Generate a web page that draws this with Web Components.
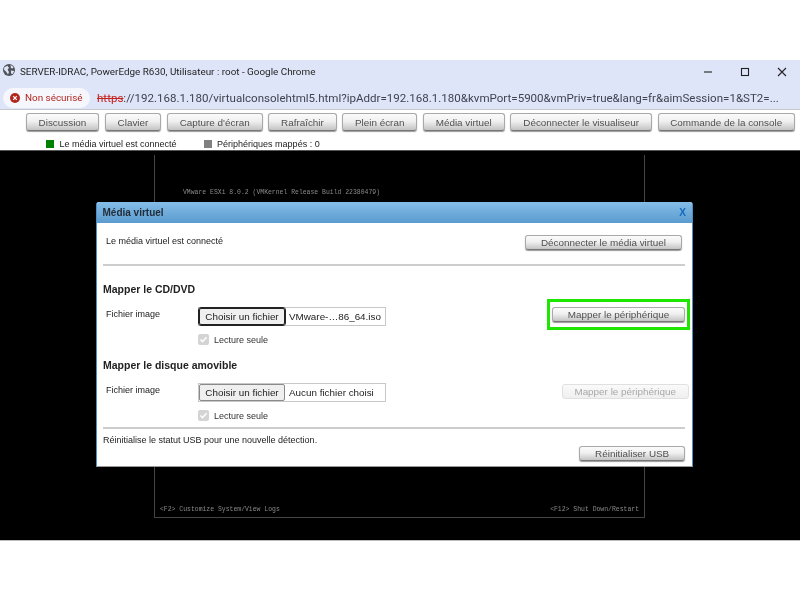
<!DOCTYPE html>
<html lang="fr">
<head>
<meta charset="utf-8">
<title>Média virtuel</title>
<style>
    html, body { margin: 0; height: 100%; background: #fff; overflow: hidden; }
    body { font-family: "Liberation Sans", Arial, sans-serif; padding-top: 60px; box-sizing: border-box; filter: blur(.35px); }
</style>
</head>
<body>
<chrome-bar></chrome-bar>
<kvm-toolbar>
    <kvm-button style="--w:73.5px">Discussion</kvm-button>
    <kvm-button style="--w:56.5px">Clavier</kvm-button>
    <kvm-button style="--w:96px">Capture d'écran</kvm-button>
    <kvm-button style="--w:68.5px">Rafraîchir</kvm-button>
    <kvm-button style="--w:75px">Plein écran</kvm-button>
    <kvm-button style="--w:82px">Média virtuel</kvm-button>
    <kvm-button style="--w:142px">Déconnecter le visualiseur</kvm-button>
    <kvm-button style="--w:137px">Commande de la console</kvm-button>
</kvm-toolbar>
<kvm-status></kvm-status>
<kvm-console>
    <media-dialog></media-dialog>
</kvm-console>

<script>
/* Chrome popup window: title bar + address bar */
class ChromeBar extends HTMLElement {
    constructor() {
        super();
        this.attachShadow({ mode: 'open' }).innerHTML = `
            <style>
                :host { display: block; background: #dfe5f8; border-bottom: 1px solid #c6c8cc; font-family: Roboto, "Open Sans", sans-serif; }
                .title { height: 23px; display: flex; align-items: center; padding-left: 3px; gap: 5px; font-size: 9.9px; color: #1f1f1f; }
                .title svg.globe { margin-top: -3px; flex: none; }
                .title span { flex: 1; white-space: nowrap; }
                .ctl { width: 37px; height: 23px; display: flex; align-items: center; justify-content: center; margin-left: -5px; }
                .addr { height: 26px; box-sizing: border-box; padding: 3px 0 0 3px; display: flex; align-items: center; }
                .pill { flex: none; height: 20px; width: 87px; box-sizing: border-box; border-radius: 10px; background: #f6f7fd; display: flex; align-items: center; gap: 5px; padding-left: 7px; font-size: 9.9px; color: #b3261e; white-space: nowrap; }
                .url { margin-left: 7px; font-size: 11.55px; color: #3f4350; white-space: nowrap; }
                s { color: #c5221f; }
            </style>
            <div class="title">
                <svg class="globe" width="12" height="12" viewBox="0 0 12 12"><circle cx="6" cy="6" r="6" fill="#4f5257"/><path d="M1.4 3.2 4.3 1.8 6 3.7 4.6 5.8 6 7.9 5 10.6 3 7.6 1 5.8ZM7.6 1 10.6 3 9.5 4.6 7.9 4ZM8 6.4 11.2 6.9 9.6 10 8 9.4Z" fill="#dfe5f8"/></svg>
                <span>SERVER-IDRAC, PowerEdge R630, Utilisateur : root - Google Chrome</span>
                <div class="ctl"><svg width="10" height="10" viewBox="0 0 10 10"><path d="M1 5h8" stroke="#222" stroke-width="1.1"/></svg></div>
                <div class="ctl"><svg width="10" height="10" viewBox="0 0 10 10"><rect x="1.5" y="1.5" width="7" height="7" fill="none" stroke="#222" stroke-width="1.1"/></svg></div>
                <div class="ctl"><svg width="10" height="10" viewBox="0 0 10 10"><path d="M1 1l8 8M9 1l-8 8" stroke="#222" stroke-width="1.1"/></svg></div>
            </div>
            <div class="addr">
                <div class="pill">
                    <svg width="10" height="10" viewBox="0 0 10 10"><circle cx="5" cy="5" r="5" fill="#b3261e"/><path d="M3.2 3.2l3.6 3.6M6.8 3.2l-3.6 3.6" stroke="#fff" stroke-width="1.2"/></svg>
                    Non sécurisé
                </div>
                <div class="url"><s>https</s>://192.168.1.180/virtualconsolehtml5.html?ipAddr=192.168.1.180&amp;kvmPort=5900&amp;vmPriv=true&amp;lang=fr&amp;aimSession=1&amp;ST2=...</div>
            </div>`;
    }
}

/* Grey gradient iDRAC button, --w sets the width */
class KvmButton extends HTMLElement {
    constructor() {
        super();
        this.attachShadow({ mode: 'open' }).innerHTML = `
            <style>
                :host { display: inline-flex; flex: none; box-sizing: border-box; width: var(--w, 73px); height: var(--h, 18px); align-items: center; justify-content: center; border: 1px solid #a9a9a9; border-bottom-color: #777; border-radius: 3px; background: linear-gradient(#fbfbfb, #f0f0f0 45%, #c4c4c4); font: 9.9px "Liberation Sans", Arial, sans-serif; color: #505050; white-space: nowrap; box-shadow: 0 1px 1px #999; }
                :host([disabled]) { color: #a8a8a8; border-color: #e0e0e0; background: linear-gradient(#fafafa, #efefef); box-shadow: none; }
            </style>
            <slot></slot>`;
    }
}

class KvmToolbar extends HTMLElement {
    constructor() {
        super();
        this.attachShadow({ mode: 'open' }).innerHTML = `
            <style>
                :host { display: flex; gap: 5.5px; box-sizing: border-box; height: 21px; padding: 3px 0 0 25.7px; }
            </style>
            <slot></slot>`;
    }
}

class KvmStatus extends HTMLElement {
    constructor() {
        super();
        this.attachShadow({ mode: 'open' }).innerHTML = `
            <style>
                :host { display: flex; align-items: center; box-sizing: border-box; height: 19px; padding: 6px 0 0 46px; font: 9px "Liberation Sans", Arial, sans-serif; color: #222; }
                i { width: 8px; height: 8px; margin-right: 5.5px; }
                span { margin-right: 27px; }
            </style>
            <i style="background:#008000"></i><span>Le média virtuel est connecté</span>
            <i style="background:#808080"></i><span>Périphériques mappés : 0</span>`;
    }
}

/* Black KVM area with the ESXi console frame behind the dialog */
class KvmConsole extends HTMLElement {
    constructor() {
        super();
        this.attachShadow({ mode: 'open' }).innerHTML = `
            <style>
                :host { display: block; position: relative; height: 389px; background: #000; border-top: 1px solid #555; border-bottom: 1px solid #bbb; }
                .frame { position: absolute; left: 154px; top: 4px; width: 491px; height: 363px; box-sizing: border-box; border: 1px solid #444; border-top: 0; font: 6.45px "Liberation Mono", monospace; color: #8a8a8a; }
                .ver { position: absolute; left: 28px; top: 34px; white-space: nowrap; }
                .l, .r { position: absolute; bottom: 4px; white-space: nowrap; }
                .l { left: 5px; }
                .r { right: 5px; }
            </style>
            <div class="frame">
                <div class="ver">VMware ESXi 8.0.2 (VMKernel Release Build 22380479)</div>
                <div class="l">&lt;F2&gt; Customize System/View Logs</div>
                <div class="r">&lt;F12&gt; Shut Down/Restart</div>
            </div>
            <slot></slot>`;
    }
}

/* One "Fichier image" row: file input look-alike + map button */
class MediaMapper extends HTMLElement {
    constructor() {
        super();
        const focus = this.hasAttribute('focus');
        const file = this.getAttribute('file');
        this.attachShadow({ mode: 'open' }).innerHTML = `
            <style>
                :host { display: block; }
                h3 { margin: 0; font-size: 10.5px; font-weight: bold; color: #222; line-height: 13px; }
                .row { display: flex; align-items: flex-start; margin-top: 11px; }
                .lbl { width: 95px; padding: 2px 0 0 3px; box-sizing: border-box; font-size: 9px; color: #222; }
                .file { width: 188px; height: 19px; box-sizing: border-box; border: 1px solid #c8c8c8; display: flex; align-items: center; font: 9.85px "Liberation Sans", Arial, sans-serif; color: #222; white-space: nowrap; }
                .pick { width: 86px; height: 17px; margin-right: 4px; box-sizing: border-box; background: #efefef; border: 1px solid #8a8a8a; border-radius: 2px; display: flex; align-items: center; justify-content: center; }
                .focus .pick { outline: 1.5px solid #222; border-color: #222; }
                .ro { display: flex; align-items: center; gap: 5px; margin: 8px 0 0 95px; font-size: 9px; color: #333; }
                .cb { width: 11px; height: 11px; background: #d4d4d4; border-radius: 2px; display: flex; }
                .act { margin-left: auto; height: 19px; }
            </style>
            <h3>${this.getAttribute('heading')}</h3>
            <div class="row ${focus ? 'focus' : ''}">
                <div class="lbl">Fichier image</div>
                <div class="file"><div class="pick">Choisir un fichier</div>${file}</div>
                <div class="act"><slot></slot></div>
            </div>
            <div class="ro">
                <div class="cb"><svg width="11" height="11" viewBox="0 0 11 11"><path d="M2.5 5.5l2 2.2 4-4.5" fill="none" stroke="#fff" stroke-width="1.5"/></svg></div>
                Lecture seule
            </div>`;
    }
}

class MediaDialog extends HTMLElement {
    constructor() {
        super();
        this.attachShadow({ mode: 'open' }).innerHTML = `
            <style>
                :host { position: absolute; left: 96px; top: 51px; width: 597px; height: 265px; box-sizing: border-box; display: flex; flex-direction: column; background: #fff; border: 1px solid #4d8fc4; border-top: 0; border-bottom-color: #999; border-radius: 3px 3px 0 0; font: 9px "Liberation Sans", Arial, sans-serif; color: #222; }
                header { height: 21px; flex: none; display: flex; align-items: center; justify-content: space-between; padding: 0 6px 0 5.5px; background: linear-gradient(#84bde8, #5b9bce); font-size: 10px; font-weight: bold; color: #222d3a; border-radius: 3px 3px 0 0; }
                header b { color: #1269b8; font-size: 10px; }
                .body { flex: 1; padding: 0 7px 0 6px; display: flex; flex-direction: column; }
                .top { height: 41px; display: flex; justify-content: space-between; align-items: flex-start; padding: 12px 3.3px 0 3px; box-sizing: border-box; }
                .top span { margin-top: 1px; }
                hr { margin: 0; height: 2px; border: 0; background: #cdcdcd; flex: none; }
                .top kvm-button, .foot kvm-button { --h: 15px; }
                media-mapper { margin-top: 17px; }
                media-mapper + media-mapper { margin-top: 14px; }
                .foot { display: flex; justify-content: space-between; align-items: flex-start; padding-top: 6px; }
                .foot kvm-button { margin-top: 11px; }
                .hl { display: flex; border: 3px solid #1fe600; padding: 5px 2px; margin: -8px -5px 0 0; }
                .off { margin: .5px -3.7px 0 0; }
                .sp { margin-top: 6px; }
            </style>
            <header>Média virtuel<b>X</b></header>
            <div class="body">
                <div class="top">
                    <span>Le média virtuel est connecté</span>
                    <kvm-button style="--w:156.5px">Déconnecter le média virtuel</kvm-button>
                </div>
                <hr>
                <media-mapper heading="Mapper le CD/DVD" file="VMware-…86_64.iso" focus>
                    <div class="hl"><kvm-button style="--w:133px;--h:15px">Mapper le périphérique</kvm-button></div>
                </media-mapper>
                <media-mapper heading="Mapper le disque amovible" file="Aucun fichier choisi">
                    <kvm-button class="off" disabled style="--w:127px;--h:15px">Mapper le périphérique</kvm-button>
                </media-mapper>
                <hr class="sp">
                <div class="foot">
                    <span>Réinitialise le statut USB pour une nouvelle détection.</span>
                    <kvm-button style="--w:105.7px">Réinitialiser USB</kvm-button>
                </div>
            </div>`;
    }
}

customElements.define('chrome-bar', ChromeBar);
customElements.define('kvm-button', KvmButton);
customElements.define('kvm-toolbar', KvmToolbar);
customElements.define('kvm-status', KvmStatus);
customElements.define('kvm-console', KvmConsole);
customElements.define('media-mapper', MediaMapper);
customElements.define('media-dialog', MediaDialog);
</script>
</body>
</html>
